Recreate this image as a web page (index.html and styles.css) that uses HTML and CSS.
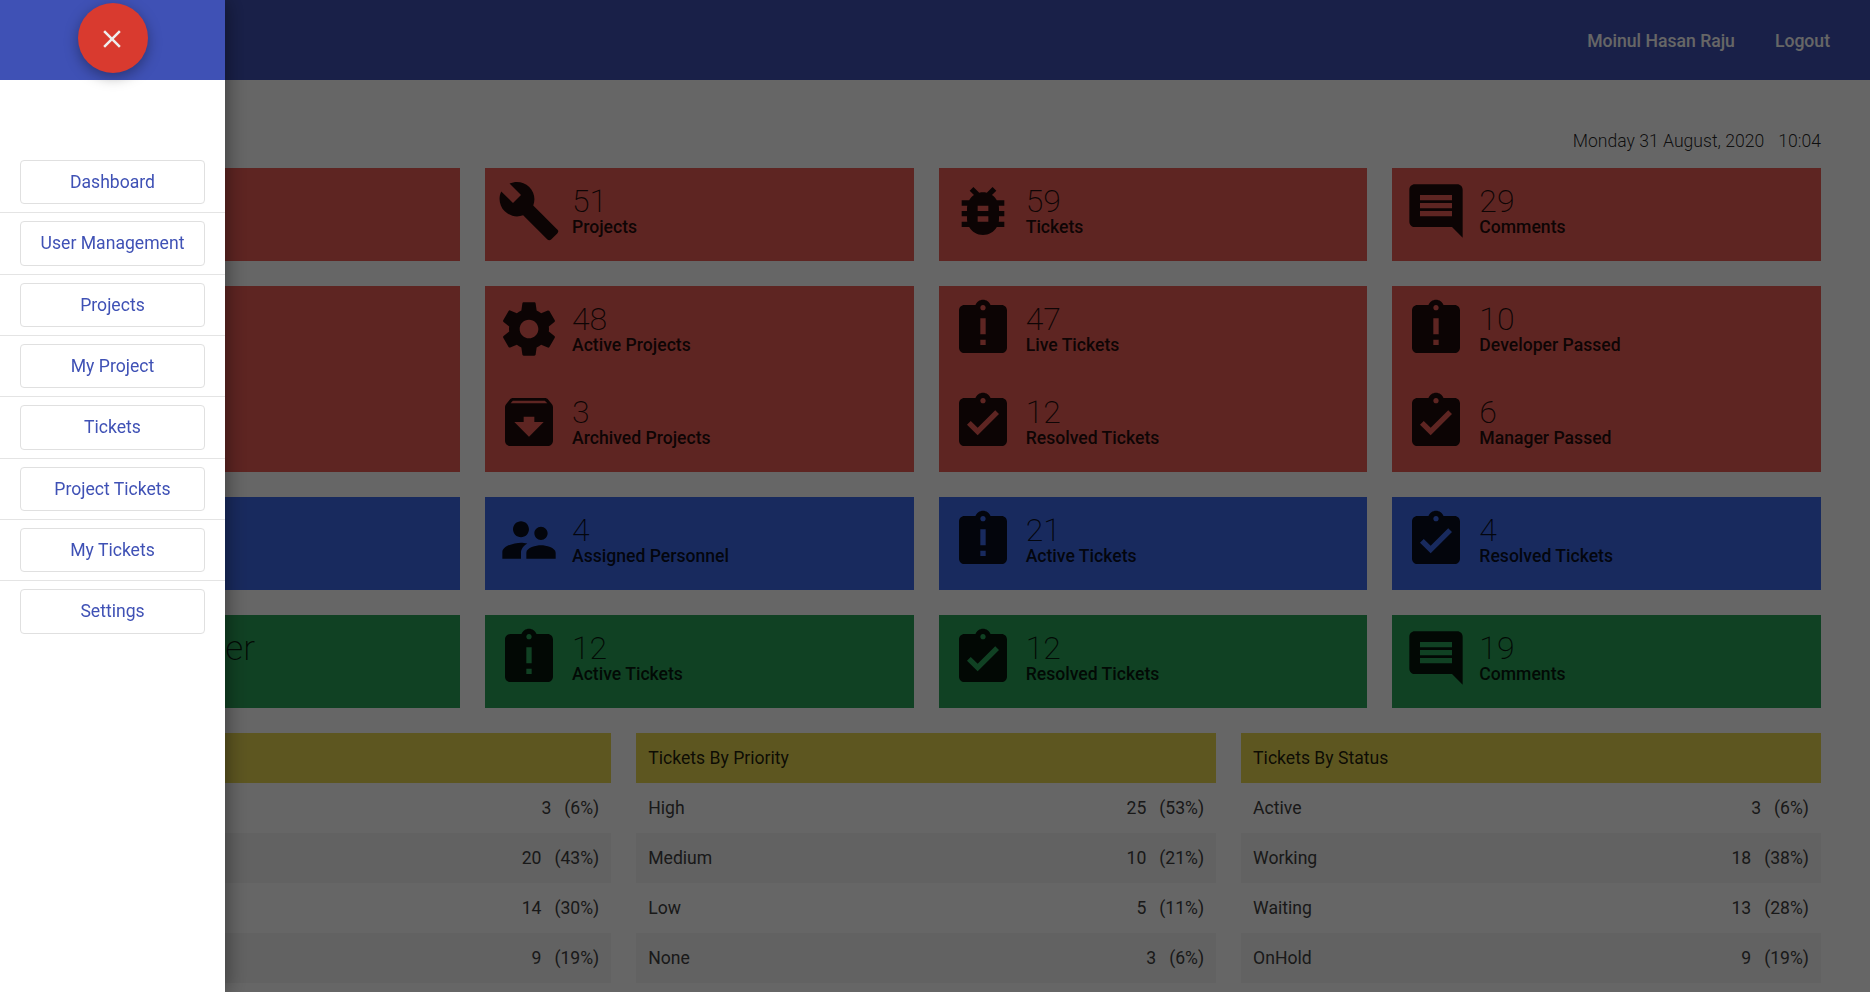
FILE: index.html
```html
<!DOCTYPE html>
<html lang="en">
<head>
  <meta charset="UTF-8" />
  <meta name="viewport" content="width=device-width, initial-scale=1.0" />
  <title>Dashboard</title>
  <link rel="stylesheet" href="styles.css">
</head>
<body>
  <svg class="icon-defs" xmlns="http://www.w3.org/2000/svg">
    <symbol id="i-build" viewBox="0 0 24 24"><path d="M22.7 19l-9.1-9.1c.9-2.3.4-5-1.5-6.9-2-2-5-2.4-7.4-1.3L9 6 6 9 1.6 4.7C.4 7.1.9 10.1 2.9 12.1c1.9 1.9 4.6 2.4 6.9 1.5l9.1 9.1c.4.4 1 .4 1.4 0l2.3-2.3c.5-.4.5-1.1.1-1.4z"/></symbol>
    <symbol id="i-bug" viewBox="0 0 24 24"><path d="M20 8h-2.81c-.45-.78-1.07-1.45-1.82-1.96L17 4.41 15.59 3l-2.17 2.17C12.96 5.06 12.49 5 12 5c-.49 0-.96.06-1.41.17L8.41 3 7 4.41l1.62 1.63C7.88 6.55 7.26 7.22 6.81 8H4v2h2.09c-.05.33-.09.66-.09 1v1H4v2h2v1c0 .34.04.67.09 1H4v2h2.81c1.04 1.79 2.97 3 5.19 3s4.15-1.21 5.19-3H20v-2h-2.09c.05-.33.09-.66.09-1v-1h2v-2h-2v-1c0-.34-.04-.67-.09-1H20V8zm-6 8h-4v-2h4v2zm0-4h-4v-2h4v2z"/></symbol>
    <symbol id="i-comment" viewBox="0 0 24 24"><path d="M20 2H4c-1.1 0-2 .9-2 2v12c0 1.1.9 2 2 2h14l4 4V4c0-1.1-.9-2-2-2zm-2 12H6v-2h12v2zm0-3H6V9h12v2zm0-3H6V6h12v2z"/></symbol>
    <symbol id="i-settings" viewBox="0 0 24 24"><path d="M19.43 12.98c.04-.32.07-.64.07-.98s-.03-.66-.07-.98l2.11-1.65c.19-.15.24-.42.12-.64l-2-3.46c-.12-.22-.39-.3-.61-.22l-2.49 1c-.52-.4-1.08-.73-1.69-.98l-.38-2.65C14.46 2.18 14.25 2 14 2h-4c-.25 0-.46.18-.49.42l-.38 2.65c-.61.25-1.17.59-1.69.98l-2.49-1c-.23-.09-.49 0-.61.22l-2 3.46c-.13.22-.07.49.12.64l2.11 1.65c-.04.32-.07.65-.07.98s.03.66.07.98l-2.11 1.65c-.19.15-.24.42-.12.64l2 3.46c.12.22.39.3.61.22l2.49-1c.52.4 1.08.73 1.69.98l.38 2.65c.03.24.24.42.49.42h4c.25 0 .46-.18.49-.42l.38-2.65c.61-.25 1.17-.59 1.69-.98l2.49 1c.23.09.49 0 .61-.22l2-3.46c.12-.22.07-.49-.12-.64l-2.11-1.65zM12 15.5c-1.93 0-3.5-1.57-3.5-3.5s1.57-3.5 3.5-3.5 3.5 1.57 3.5 3.5-1.57 3.5-3.5 3.5z"/></symbol>
    <symbol id="i-late" viewBox="0 0 24 24"><path d="M19 3h-4.18C14.4 1.84 13.3 1 12 1c-1.3 0-2.4.84-2.82 2H5c-1.1 0-2 .9-2 2v14c0 1.1.9 2 2 2h14c1.1 0 2-.9 2-2V5c0-1.1-.9-2-2-2zm-6 15h-2v-2h2v2zm0-4h-2V8h2v6zm-1-9c-.55 0-1-.45-1-1s.45-1 1-1 1 .45 1 1-.45 1-1 1z"/></symbol>
    <symbol id="i-done" viewBox="0 0 24 24"><path d="M19 3h-4.18C14.4 1.84 13.3 1 12 1c-1.3 0-2.4.84-2.82 2H5c-1.1 0-2 .9-2 2v14c0 1.1.9 2 2 2h14c1.1 0 2-.9 2-2V5c0-1.1-.9-2-2-2zm-7 0c.55 0 1 .45 1 1s-.45 1-1 1-1-.45-1-1 .45-1 1-1zm-2 14l-4-4 1.41-1.41L10 14.17l6.59-6.59L18 9l-8 8z"/></symbol>
    <symbol id="i-archive" viewBox="0 0 24 24"><path d="M20.54 5.23l-1.39-1.68C18.88 3.21 18.47 3 18 3H6c-.47 0-.88.21-1.16.55L3.46 5.23C3.17 5.57 3 6.02 3 6.5V19c0 1.1.9 2 2 2h14c1.1 0 2-.9 2-2V6.5c0-.48-.17-.93-.46-1.27zM12 17.5L6.5 12H10v-2h4v2h3.5L12 17.5zM5.12 5l.81-1h12l.94 1H5.12z"/></symbol>
    <symbol id="i-people" viewBox="0 0 24 24"><path d="M16.5 12c1.38 0 2.49-1.12 2.49-2.5S17.88 7 16.5 7C15.12 7 14 8.12 14 9.5s1.12 2.5 2.5 2.5zM9 11c1.66 0 2.99-1.34 2.99-3S10.66 5 9 5C7.34 5 6 6.34 6 8s1.34 3 3 3zm7.5 3c-1.83 0-5.5.92-5.5 2.75V19h11v-2.25c0-1.83-3.67-2.75-5.5-2.75zM9 13c-2.33 0-7 1.17-7 3.5V19h7v-2.25c0-.85.33-2.34 2.37-3.47C10.5 13.1 9.66 13 9 13z"/></symbol>
  </svg>

  <header class="topbar">
    <a class="topbar-link">Moinul Hasan Raju</a>
    <a class="topbar-link">Logout</a>
  </header>

  <main class="content">
    <div class="date-row">
      <span>Monday 31 August, 2020</span>
      <span>10:04</span>
    </div>

    <div class="card-grid">
      <div class="card red"></div>
      <div class="card red">
        <div class="stat"><svg class="stat-icon"><use href="#i-build"/></svg><div><div class="stat-num">51</div><div class="stat-label">Projects</div></div></div>
      </div>
      <div class="card red">
        <div class="stat"><svg class="stat-icon"><use href="#i-bug"/></svg><div><div class="stat-num">59</div><div class="stat-label">Tickets</div></div></div>
      </div>
      <div class="card red">
        <div class="stat"><svg class="stat-icon"><use href="#i-comment"/></svg><div><div class="stat-num">29</div><div class="stat-label">Comments</div></div></div>
      </div>

      <div class="card red"></div>
      <div class="card red">
        <div class="stat"><svg class="stat-icon"><use href="#i-settings"/></svg><div><div class="stat-num">48</div><div class="stat-label">Active Projects</div></div></div>
        <div class="stat"><svg class="stat-icon"><use href="#i-archive"/></svg><div><div class="stat-num">3</div><div class="stat-label">Archived Projects</div></div></div>
      </div>
      <div class="card red">
        <div class="stat"><svg class="stat-icon"><use href="#i-late"/></svg><div><div class="stat-num">47</div><div class="stat-label">Live Tickets</div></div></div>
        <div class="stat"><svg class="stat-icon"><use href="#i-done"/></svg><div><div class="stat-num">12</div><div class="stat-label">Resolved Tickets</div></div></div>
      </div>
      <div class="card red">
        <div class="stat"><svg class="stat-icon"><use href="#i-late"/></svg><div><div class="stat-num">10</div><div class="stat-label">Developer Passed</div></div></div>
        <div class="stat"><svg class="stat-icon"><use href="#i-done"/></svg><div><div class="stat-num">6</div><div class="stat-label">Manager Passed</div></div></div>
      </div>

      <div class="card blue"></div>
      <div class="card blue">
        <div class="stat"><svg class="stat-icon"><use href="#i-people"/></svg><div><div class="stat-num">4</div><div class="stat-label">Assigned Personnel</div></div></div>
      </div>
      <div class="card blue">
        <div class="stat"><svg class="stat-icon"><use href="#i-late"/></svg><div><div class="stat-num">21</div><div class="stat-label">Active Tickets</div></div></div>
      </div>
      <div class="card blue">
        <div class="stat"><svg class="stat-icon"><use href="#i-done"/></svg><div><div class="stat-num">4</div><div class="stat-label">Resolved Tickets</div></div></div>
      </div>

      <div class="card green"><div class="role-name">Member</div></div>
      <div class="card green">
        <div class="stat"><svg class="stat-icon"><use href="#i-late"/></svg><div><div class="stat-num">12</div><div class="stat-label">Active Tickets</div></div></div>
      </div>
      <div class="card green">
        <div class="stat"><svg class="stat-icon"><use href="#i-done"/></svg><div><div class="stat-num">12</div><div class="stat-label">Resolved Tickets</div></div></div>
      </div>
      <div class="card green">
        <div class="stat"><svg class="stat-icon"><use href="#i-comment"/></svg><div><div class="stat-num">19</div><div class="stat-label">Comments</div></div></div>
      </div>
    </div>

    <div class="table-grid">
      <div class="summary">
        <div class="summary-head"></div>
        <div class="summary-row"><span></span><span class="count"><span>3</span><span>(6%)</span></span></div>
        <div class="summary-row"><span></span><span class="count"><span>20</span><span>(43%)</span></span></div>
        <div class="summary-row"><span></span><span class="count"><span>14</span><span>(30%)</span></span></div>
        <div class="summary-row"><span></span><span class="count"><span>9</span><span>(19%)</span></span></div>
      </div>
      <div class="summary">
        <div class="summary-head">Tickets By Priority</div>
        <div class="summary-row"><span>High</span><span class="count"><span>25</span><span>(53%)</span></span></div>
        <div class="summary-row"><span>Medium</span><span class="count"><span>10</span><span>(21%)</span></span></div>
        <div class="summary-row"><span>Low</span><span class="count"><span>5</span><span>(11%)</span></span></div>
        <div class="summary-row"><span>None</span><span class="count"><span>3</span><span>(6%)</span></span></div>
      </div>
      <div class="summary">
        <div class="summary-head">Tickets By Status</div>
        <div class="summary-row"><span>Active</span><span class="count"><span>3</span><span>(6%)</span></span></div>
        <div class="summary-row"><span>Working</span><span class="count"><span>18</span><span>(38%)</span></span></div>
        <div class="summary-row"><span>Waiting</span><span class="count"><span>13</span><span>(28%)</span></span></div>
        <div class="summary-row"><span>OnHold</span><span class="count"><span>9</span><span>(19%)</span></span></div>
      </div>
    </div>
  </main>

  <div class="backdrop"></div>

  <aside class="sidebar">
    <div class="sidebar-head">
      <button class="close-btn" type="button" aria-label="Close">
        <svg viewBox="0 0 24 24"><path d="M19 6.41L17.59 5 12 10.59 6.41 5 5 6.41 10.59 12 5 17.59 6.41 19 12 13.41 17.59 19 19 17.59 13.41 12z"/></svg>
      </button>
    </div>
    <ul class="side-nav">
      <li><a class="side-btn">Dashboard</a></li>
      <li><a class="side-btn">User Management</a></li>
      <li><a class="side-btn">Projects</a></li>
      <li><a class="side-btn">My Project</a></li>
      <li><a class="side-btn">Tickets</a></li>
      <li><a class="side-btn">Project Tickets</a></li>
      <li><a class="side-btn">My Tickets</a></li>
      <li><a class="side-btn">Settings</a></li>
    </ul>
  </aside>
</body>
</html>
```

FILE: styles.css
```css
* {
  margin: 0;
  padding: 0;
  box-sizing: border-box;
  font-family: 'Roboto', sans-serif;
}

html, body {
  height: 100%;
  overflow: hidden;
}

body {
  background: #fff;
  color: rgba(0, 0, 0, 0.87);
}

.icon-defs {
  display: none;
}

.topbar {
  height: 80px;
  background: #3f51b5;
  display: flex;
  justify-content: flex-end;
  align-items: center;
  gap: 40px;
  padding: 1px 40px 0 0;
}

.topbar-link {
  color: #fff;
  font-size: 17.6px;
  font-weight: 500;
}

.content {
  padding: 0 49px 0 31.33px;
}

.date-row {
  display: flex;
  justify-content: flex-end;
  gap: 14px;
  padding-top: 49px;
  height: 88px;
  font-size: 17.6px;
  font-weight: 300;
  line-height: 24px;
}

.card-grid {
  display: grid;
  grid-template-columns: repeat(4, 1fr);
  gap: 25px;
}

.card {
  min-height: 93px;
}

.red { background: #eb5c55; }
.blue { background: #3e69eb; }
.green { background: #2aa258; }

.stat {
  height: 93px;
  display: flex;
  padding: 11px 12px 0;
}

.stat-icon {
  width: 64px;
  height: 64px;
  flex: none;
  margin-right: 11px;
  fill: rgba(0, 0, 0, 0.87);
}

.stat-num {
  font-size: 32px;
  font-weight: 200;
  line-height: 32px;
  margin-top: 6px;
}

.stat-label {
  font-size: 17.6px;
  font-weight: 500;
  line-height: 20px;
}

.role-name {
  font-size: 35.2px;
  font-weight: 200;
  line-height: 66px;
  margin-left: 95px;
}

.table-grid {
  display: grid;
  grid-template-columns: repeat(3, 1fr);
  gap: 25px;
  margin-top: 25px;
}

.summary-head {
  height: 50px;
  line-height: 50px;
  padding: 0 12px;
  background: #e8d752;
  font-size: 17.6px;
}

.summary-row {
  height: 50px;
  display: flex;
  justify-content: space-between;
  align-items: center;
  padding: 0 12px;
  font-size: 17.6px;
  color: #404040;
}

.summary-row:nth-child(even) {
  background: #fff;
}

.summary-row:nth-child(odd) {
  background: #f4f4f4;
}

.count {
  display: flex;
  gap: 13px;
}

/* dim layer behind the open drawer */
.backdrop {
  position: fixed;
  inset: 0;
  background: rgba(0, 0, 0, 0.6);
}

.sidebar {
  position: fixed;
  top: 0;
  left: 0;
  bottom: 0;
  width: 225px;
  background: #fff;
  box-shadow: 2px 0 20px rgba(0, 0, 0, 0.4);
}

.sidebar-head {
  height: 80px;
  background: #3f51b5;
  display: flex;
  justify-content: center;
  padding-top: 3px;
}

.close-btn {
  width: 70px;
  height: 70px;
  border: none;
  border-radius: 50%;
  background: #d93a2f;
  box-shadow: 0 4px 14px rgba(0, 0, 0, 0.35);
  display: flex;
  align-items: center;
  justify-content: center;
}

.close-btn svg {
  width: 30px;
  height: 30px;
  margin: 2px 1px 0 0;
  fill: #eee;
}

.side-nav {
  list-style: none;
  margin-top: 72px;
}

.side-nav li {
  padding: 8px 20px;
  border-bottom: 1px solid #e4e4e4;
}

.side-nav li:last-child {
  border-bottom: none;
}

.side-btn {
  display: block;
  height: 44.33px;
  line-height: 43.5px;
  text-align: center;
  border: 1px solid #e0e0e0;
  border-radius: 4px;
  color: #3f51b5;
  font-size: 17.6px;
}
```
